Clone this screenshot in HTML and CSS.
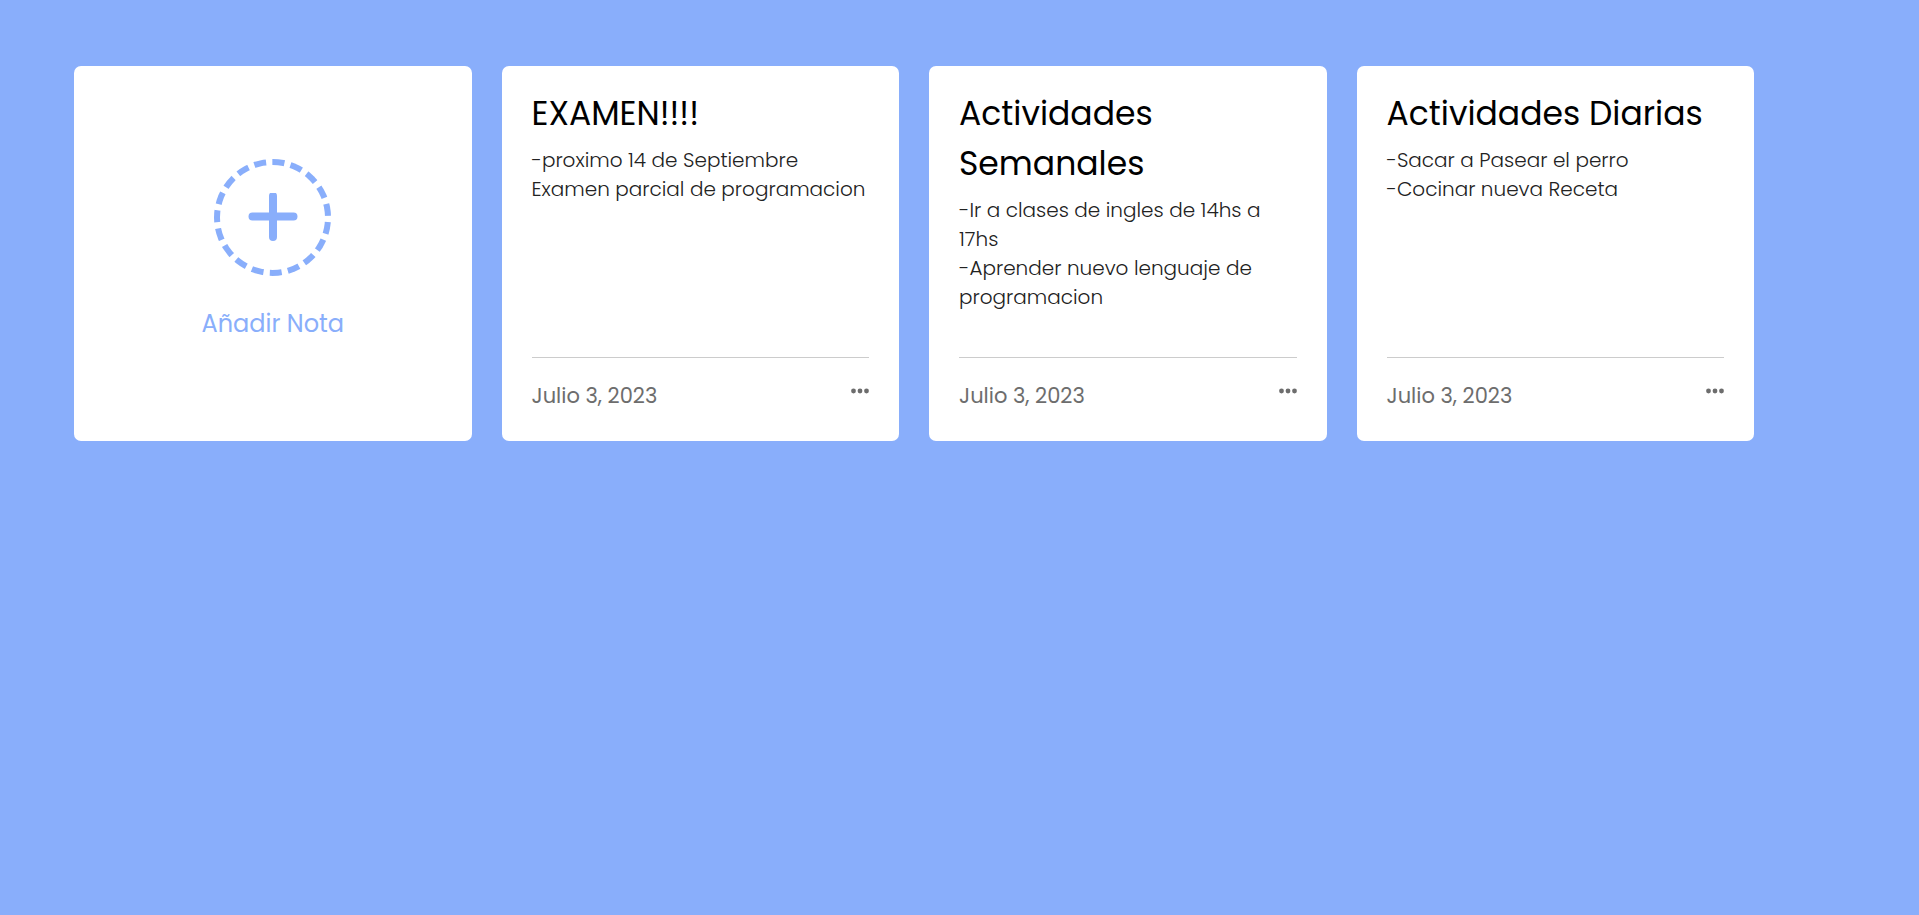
FILE: index.html
```
<!DOCTYPE html>
<html lang="es">
<head>
  <meta charset="utf-8">
  <meta name="viewport" content="width=device-width, initial-scale=1">
  <title>Notas</title>
  <link rel="stylesheet" href="styles.css">
</head>
<body>
  <main class="notes">
    <button class="card add-card" type="button">
      <span class="add-icon">
        <svg class="plus" viewBox="0 0 50 50" aria-hidden="true"><path d="M25 3v41M4.500 23.500h41"/></svg>
      </span>
      <span class="add-label">Añadir Nota</span>
    </button>

    <article class="card note">
      <div class="details">
        <h2 class="title">EXAMEN!!!!</h2>
        <p class="text">-proximo 14 de Septiembre<br>Examen parcial de programacion</p>
      </div>
      <footer class="footer">
        <time class="date" datetime="2023-07-03">Julio 3, 2023</time>
        <button class="menu" type="button" aria-label="Opciones"><svg class="dots" viewBox="0 0 18 6" aria-hidden="true"><circle cx="2.5" cy="3" r="2.4"/><circle cx="9" cy="3" r="2.4"/><circle cx="15.5" cy="3" r="2.4"/></svg></button>
      </footer>
    </article>

    <article class="card note">
      <div class="details">
        <h2 class="title">Actividades Semanales</h2>
        <p class="text">-Ir a clases de ingles de 14hs a 17hs<br>-Aprender nuevo lenguaje de programacion</p>
      </div>
      <footer class="footer">
        <time class="date" datetime="2023-07-03">Julio 3, 2023</time>
        <button class="menu" type="button" aria-label="Opciones"><svg class="dots" viewBox="0 0 18 6" aria-hidden="true"><circle cx="2.5" cy="3" r="2.4"/><circle cx="9" cy="3" r="2.4"/><circle cx="15.5" cy="3" r="2.4"/></svg></button>
      </footer>
    </article>

    <article class="card note">
      <div class="details">
        <h2 class="title">Actividades Diarias</h2>
        <p class="text">-Sacar a Pasear el perro<br>-Cocinar nueva Receta</p>
      </div>
      <footer class="footer">
        <time class="date" datetime="2023-07-03">Julio 3, 2023</time>
        <button class="menu" type="button" aria-label="Opciones"><svg class="dots" viewBox="0 0 18 6" aria-hidden="true"><circle cx="2.5" cy="3" r="2.4"/><circle cx="9" cy="3" r="2.4"/><circle cx="15.5" cy="3" r="2.4"/></svg></button>
      </footer>
    </article>
  </main>
</body>
</html>
```
FILE: styles.css
```
* {
  box-sizing: border-box;
  margin: 0;
  padding: 0;
  font-family: Poppins, Inter, "Open Sans", sans-serif;
}

body {
  background: #89aefb;
}

.notes {
  display: grid;
  grid-template-columns: repeat(4, 1fr);
  gap: 30px;
  padding: 66px 165px 66px 74px;
}

.card {
  min-height: 375px;
  border: 0;
  border-radius: 7px;
  background: #fff;
}

.add-card {
  display: flex;
  flex-direction: column;
  align-items: center;
  justify-content: center;
  gap: 30px;
  padding-bottom: 6px;
  color: #89aefb;
  cursor: pointer;
}

.add-icon {
  display: flex;
  align-items: center;
  justify-content: center;
  width: 117px;
  height: 117px;
  border: 6px dashed #89aefb;
  border-radius: 50%;
}

.plus {
  width: 50px;
  height: 50px;
  fill: none;
  stroke: currentColor;
  stroke-width: 8;
  stroke-linecap: round;
}

.add-label {
  font-size: 24px;
  line-height: 36px;
}

.note {
  display: flex;
  flex-direction: column;
  justify-content: space-between;
  padding: 23px 30px 29px;
}

.title {
  color: #000;
  font-size: 33px;
  font-weight: 400;
  line-height: 50px;
}

.text {
  margin-top: 7px;
  color: #222;
  font-size: 20px;
  font-weight: 300;
  line-height: 29px;
}

.footer {
  display: flex;
  align-items: flex-start;
  justify-content: space-between;
  padding-top: 22px;
  border-top: 1px solid #ccc;
}

.date {
  color: #6d6d6d;
  font-size: 21px;
  line-height: 32px;
}

.menu {
  display: flex;
  padding-top: 8px;
  border: 0;
  background: none;
  color: #6d6d6d;
  cursor: pointer;
}

.dots {
  width: 18px;
  height: 6px;
  fill: currentColor;
}
```
